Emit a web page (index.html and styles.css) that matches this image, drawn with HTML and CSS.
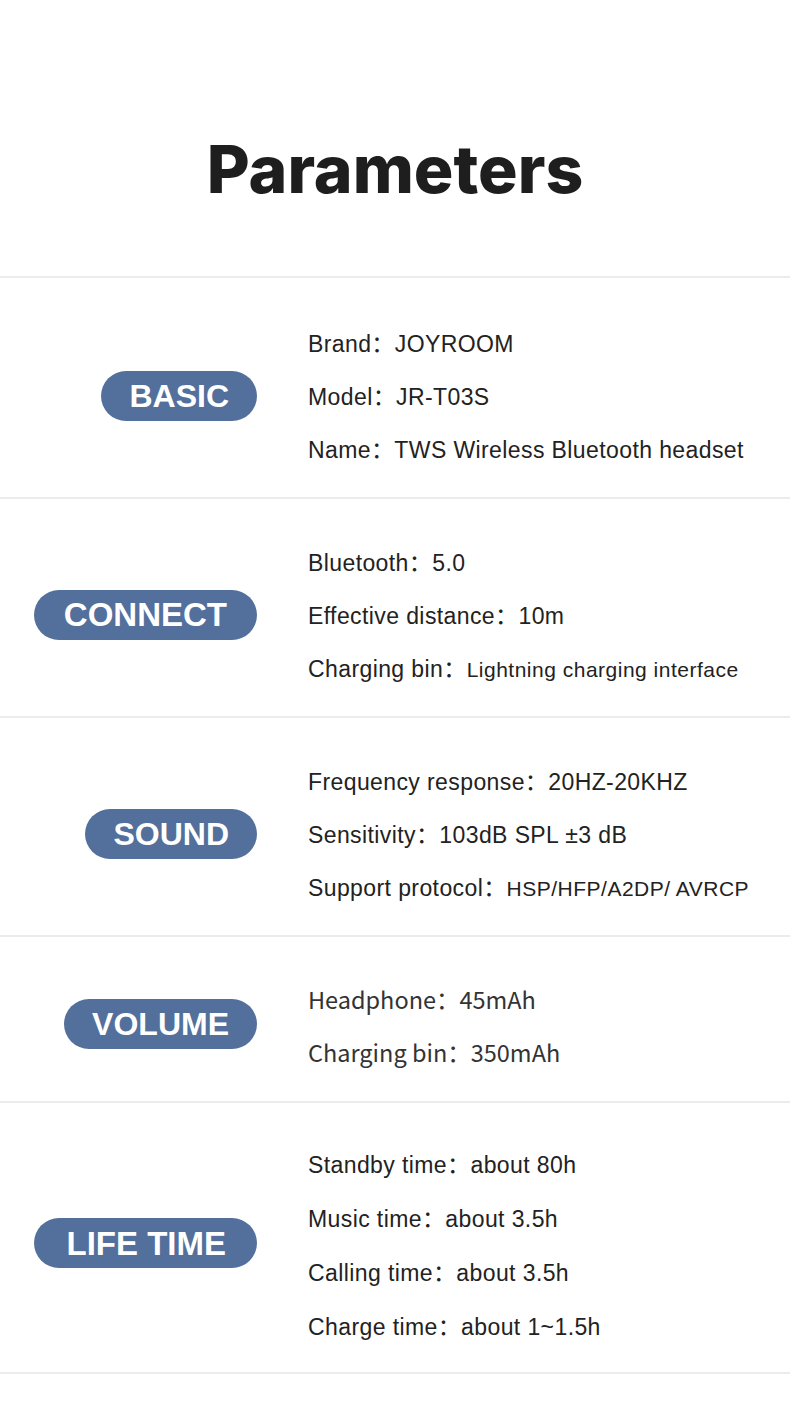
FILE: index.html
```html
<!DOCTYPE html>
<html lang="en">
<head>
<meta charset="utf-8">
<title>Parameters</title>
<link rel="stylesheet" href="styles.css">
</head>
<body>
<div class="page">
  <header class="header">
    <h1 class="title">Parameters</h1>
  </header>

  <section class="group group-basic">
    <div class="label"><span class="pill">BASIC</span></div>
    <ul class="specs">
      <li>Brand：JOYROOM</li>
      <li>Model：JR-T03S</li>
      <li>Name：TWS Wireless Bluetooth headset</li>
    </ul>
  </section>

  <section class="group">
    <div class="label"><span class="pill pill-wide">CONNECT</span></div>
    <ul class="specs">
      <li>Bluetooth：5.0</li>
      <li>Effective distance：10m</li>
      <li>Charging bin：<span class="small">Lightning charging interface</span></li>
    </ul>
  </section>

  <section class="group">
    <div class="label"><span class="pill">SOUND</span></div>
    <ul class="specs">
      <li>Frequency response：20HZ-20KHZ</li>
      <li>Sensitivity：103dB SPL ±3 dB</li>
      <li>Support protocol：<span class="small">HSP/HFP/A2DP/ AVRCP</span></li>
    </ul>
  </section>

  <section class="group group-volume">
    <div class="label"><span class="pill">VOLUME</span></div>
    <ul class="specs specs-cjk">
      <li>Headphone：45mAh</li>
      <li>Charging bin：350mAh</li>
    </ul>
  </section>

  <section class="group group-life">
    <div class="label label-life"><span class="pill pill-wide pill-life">LIFE TIME</span></div>
    <ul class="specs specs-tall">
      <li>Standby time：about 80h</li>
      <li>Music time：about 3.5h</li>
      <li>Calling time：about 3.5h</li>
      <li>Charge time：about 1~1.5h</li>
    </ul>
  </section>
  <div class="end-rule"></div>
</div>
</body>
</html>
```

FILE: styles.css
```css
* { box-sizing: border-box; }

html, body {
  margin: 0;
  padding: 0;
  background: #ffffff;
}

.page {
  width: 790px;
  min-height: 1418px;
  background: #ffffff;
}

.header {
  height: 276px;
  display: flex;
  align-items: center;
  justify-content: center;
  padding-top: 62px;
}

.title {
  margin: 0;
  font-family: Inter, "Noto Sans", sans-serif;
  font-weight: 800;
  font-size: 66px;
  line-height: 1;
  letter-spacing: 0;
  color: #1e1e1e;
}

.group {
  display: grid;
  grid-template-columns: 257px 1fr;
  column-gap: 51px;
  align-items: center;
  border-top: 2px solid #ececec;
  padding: 38px 0 20px;
}

.group-basic { padding: 40px 0 20px; }
.group-volume { padding: 36px 0 22px; }
.group-life { padding: 35px 0 18px; }

.end-rule {
  border-top: 2px solid #ececec;
}

.label {
  display: flex;
  justify-content: flex-end;
  margin-top: -4px;
}

.label-life { margin-top: -6px; }

.pill {
  display: inline-flex;
  align-items: center;
  height: 50px;
  padding: 0 28px;
  border-radius: 25px;
  background: #52709b;
  color: #ffffff;
  font-family: "Liberation Sans", Arial, sans-serif;
  font-weight: 700;
  font-size: 32px;
  line-height: 1;
}

.pill-wide {
  padding: 0 30px;
  font-size: 33px;
}

.pill-life { padding: 0 31px 0 33px; }

.specs {
  list-style: none;
  margin: 0;
  padding: 0;
  font-family: "Liberation Sans", Arial, "Noto Sans CJK SC", sans-serif;
  font-size: 23px;
  letter-spacing: 0.4px;
  line-height: 53px;
  color: #222222;
}

.specs-tall { line-height: 54px; }

.specs-cjk {
  font-family: "Noto Sans CJK SC", "Noto Sans", sans-serif;
  font-size: 23.5px;
  letter-spacing: 0;
  color: #333333;
}

.small {
  font-size: 21px;
  letter-spacing: 0.5px;
}
```
